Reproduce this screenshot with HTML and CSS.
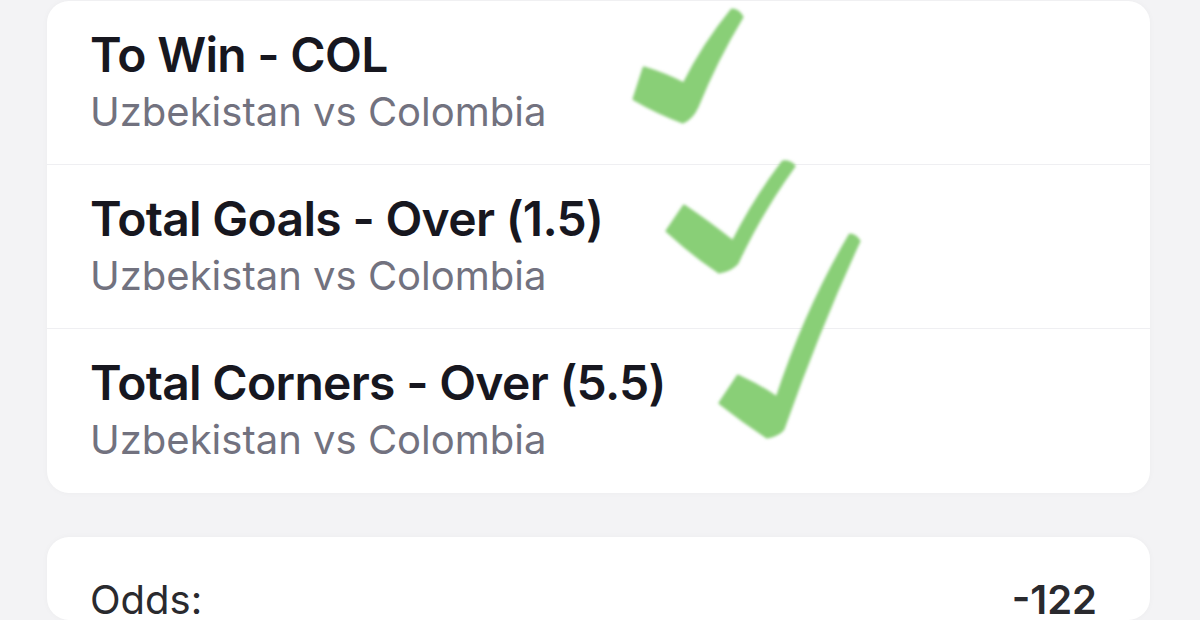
FILE: index.html
```html
<!DOCTYPE html>
<html lang="en">
<head>
  <meta charset="UTF-8" />
  <title>Bet Slip</title>
  <link rel="stylesheet" href="styles.css">
</head>
<body>

  <div class="slip">

    <!-- LEGS -->
    <div class="card legs">
      <div class="leg">
        <div class="leg-pick">To Win - COL</div>
        <div class="leg-match">Uzbekistan vs Colombia</div>
      </div>
      <div class="leg">
        <div class="leg-pick">Total Goals - Over (1.5)</div>
        <div class="leg-match">Uzbekistan vs Colombia</div>
      </div>
      <div class="leg">
        <div class="leg-pick">Total Corners - Over (5.5)</div>
        <div class="leg-match">Uzbekistan vs Colombia</div>
      </div>
    </div>

    <!-- SUMMARY -->
    <div class="card summary">
      <div class="summary-row">
        <span class="summary-label">Odds:</span>
        <span class="summary-value">-122</span>
      </div>
    </div>

    <!-- hand drawn ticks on top of the slip -->
    <svg class="ticks" width="1200" height="620" viewBox="0 0 1200 620">
      <defs>
        <filter id="soft" x="-20%" y="-20%" width="140%" height="140%">
          <feGaussianBlur stdDeviation="1.7" />
        </filter>
      </defs>
      <g fill="#89cf77" stroke="#89cf77" stroke-width="3" stroke-linejoin="round" filter="url(#soft)">
        <path d="M644 68 L634 99 Q658 113 683 122 Q692 118 697 107 Q716 60 742 17 Q738 10 732 10 Q704 44 684 84 Q664 74 644 68 Z" />
        <path d="M684 206 L667 231 Q692 254 719 272 Q731 270 737 263 Q762 210 794 166 Q789 161 783 162 Q754 200 733 242 Q708 222 684 206 Z" />
        <path d="M738 376 L720 403 Q743 421 767 437 Q778 435 783 429 Q818 330 859 241 Q855 235 850 235 Q806 310 777 398 Q758 385 738 376 Z" />
      </g>
    </svg>

  </div>

</body>
</html>
```

FILE: styles.css
```css
body {
  margin: 0;
  background: #f3f3f5;
  font-family: Inter, "Noto Sans", sans-serif;
}

.slip {
  position: relative;
  width: 1200px;
  height: 620px;
  overflow: hidden;
  padding: 1px 50px 0 47px;
  box-sizing: border-box;
  display: flex;
  flex-direction: column;
  gap: 44px;
}

.card {
  background: #fff;
  border-radius: 22px;
  box-shadow: 0 0 6px rgba(0,0,0,0.03);
}

.leg {
  padding: 26px 43px 29px;
  border-bottom: 1px solid #efeff2;
}
.leg:last-child { border-bottom: none; padding-bottom: 30px; }

.leg-pick {
  font-size: 48px;
  line-height: 56px;
  font-weight: 600;
  letter-spacing: -0.7px;
  color: #17171f;
}

.leg-match {
  margin-top: 6px;
  font-size: 40px;
  line-height: 46px;
  color: #72727f;
}

.summary {
  padding: 43px 53px 0 43px;
  flex: 1;
}

.summary-row {
  display: flex;
  justify-content: space-between;
  font-size: 40px;
  line-height: 40px;
  color: #2a2a2e;
}

.summary-value { font-weight: 600; }

.ticks {
  position: absolute;
  top: 0;
  left: 0;
}
```
